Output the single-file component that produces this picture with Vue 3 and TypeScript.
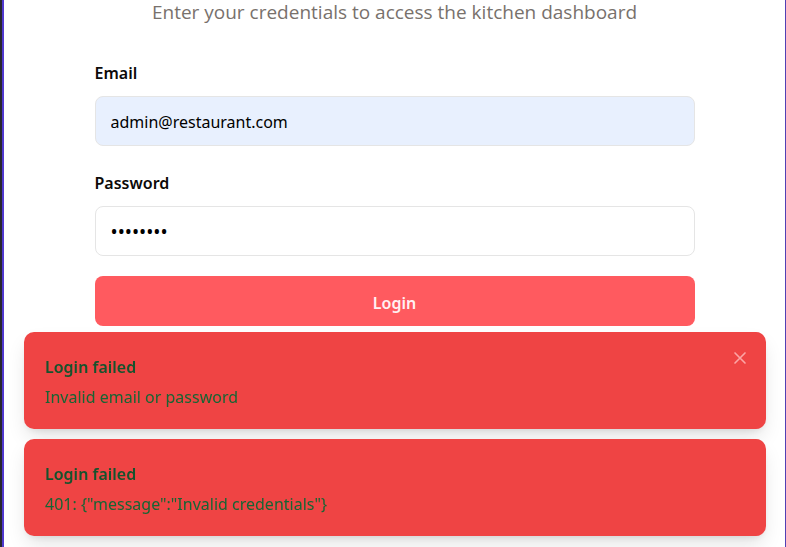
<script setup lang="ts">
import { ref } from 'vue'

interface Toast {
  id: number
  title: string
  description: string
  closeVisible: boolean
}

const email = ref('admin@restaurant.com')
const password = ref('password')

const toasts = ref<Toast[]>([
  { id: 1, title: 'Login failed', description: 'Invalid email or password', closeVisible: true },
  { id: 2, title: 'Login failed', description: '401: {"message":"Invalid credentials"}', closeVisible: false },
])

function dismiss(id: number): void {
  toasts.value = toasts.value.filter((toast) => toast.id !== id)
}
</script>

<template>
  <div class="frame">
    <main class="page">
      <form class="login" @submit.prevent>
        <p class="subtitle">Enter your credentials to access the kitchen dashboard</p>
        <div class="field">
          <label for="email">Email</label>
          <input id="email" v-model="email" class="filled" type="email" autocomplete="username" />
        </div>
        <div class="field">
          <label for="password">Password</label>
          <input id="password" v-model="password" type="password" autocomplete="current-password" />
        </div>
        <button class="submit" type="submit">Login</button>
      </form>
    </main>
    <ol class="toasts">
      <li v-for="toast in toasts" :key="toast.id" class="toast" role="alert">
        <strong class="toast-title">{{ toast.title }}</strong>
        <span class="toast-text">{{ toast.description }}</span>
        <button
          v-if="toast.closeVisible"
          class="close"
          type="button"
          aria-label="Close"
          @click="dismiss(toast.id)"
        >
          <svg viewBox="0 0 24 24" width="20" height="20" aria-hidden="true">
            <path d="M18 6 6 18M6 6l12 12" />
          </svg>
        </button>
      </li>
    </ol>
  </div>
</template>

<style>
body {
  background: #ffffff;
}
</style>

<style scoped>
.frame {
  box-sizing: border-box;
  min-height: 100vh;
  border-left: 2px solid #27272f;
  font-family: 'Segoe UI', 'Noto Sans', 'Open Sans', sans-serif;
  color: #0c0a09;
}

.page {
  box-sizing: border-box;
  min-height: 100vh;
  border-left: 2px solid #5039cf;
  border-right: 1px solid #5140b4;
}

.login {
  display: flex;
  flex-direction: column;
  gap: 20px;
  max-width: 600px;
  margin: 0 auto;
}

.subtitle {
  margin: 0 0 12px;
  font-family: 'Segoe UI', 'Open Sans', sans-serif;
  font-size: 19px;
  line-height: 24px;
  text-align: center;
  color: #78716c;
}

.field {
  display: flex;
  flex-direction: column;
  gap: 10px;
  padding-top: 4px;
}

label {
  font-size: 16px;
  font-weight: 600;
  line-height: 26px;
}

input {
  box-sizing: border-box;
  width: 100%;
  height: 50px;
  padding: 2px 15px 0;
  border: 1px solid #e5e5e5;
  border-radius: 8px;
  background: #ffffff;
  font-family: inherit;
  font-size: 16px;
  color: #000000;
}

input[type='password'] {
  font-size: 19px;
}

input.filled {
  background: #e8f0fe;
}

.submit {
  height: 50px;
  padding: 3px 0 0;
  border: 0;
  border-radius: 8px;
  background: #ff5a5f;
  font-family: inherit;
  font-size: 16px;
  font-weight: 600;
  color: #fff1f2;
}

.toasts {
  position: fixed;
  right: 20px;
  bottom: 11px;
  left: 24px;
  display: flex;
  flex-direction: column;
  gap: 10px;
  margin: 0;
  padding: 0;
  list-style: none;
}

.toast {
  position: relative;
  display: flex;
  flex-direction: column;
  gap: 4px;
  padding: 22px 21px 19px;
  border-radius: 10px;
  background: #ef4444;
  box-shadow: 0 10px 20px -3px rgb(0 0 0 / 12%), 0 4px 8px -4px rgb(0 0 0 / 12%);
}

.toast-title {
  font-size: 16px;
  font-weight: 600;
  line-height: 26px;
  color: #14532d;
}

.toast-text {
  font-size: 16px;
  line-height: 26px;
  color: #166534;
}

.close {
  position: absolute;
  top: 11px;
  right: 11px;
  display: grid;
  place-items: center;
  width: 30px;
  height: 30px;
  padding: 0;
  border: 0;
  background: transparent;
}

.close path {
  fill: none;
  stroke: #fca5a5;
  stroke-width: 2;
  stroke-linecap: round;
}
</style>
